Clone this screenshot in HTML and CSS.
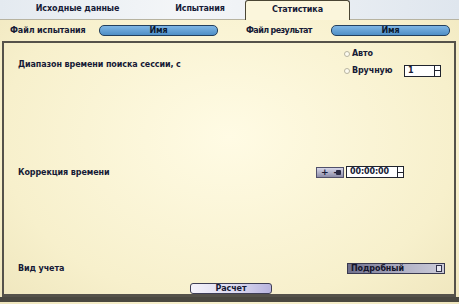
FILE: index.html
```html
<!DOCTYPE html>
<html>
	<head>
		<meta charset="UTF-8">
		<title>Статистика</title>
		<link rel="stylesheet" href="styles.css">
	</head>
	<body>
		<div id="tabs">
			<span class="tab">Исходные данные</span>
			<span class="tab">Испытания</span>
			<span class="tab active">Статистика</span>
		</div>
		<div id="files">
			<span class="flabel">Файл испытания</span>
			<span class="pill">Имя</span>
			<span class="flabel right">Файл результат</span>
			<span class="pill">Имя</span>
		</div>
		<div id="panel">
			<div class="row range">
				<span class="label">Диапазон времени поиска сессии, с</span>
				<div class="radios">
					<div class="radio"><i></i>Авто</div>
					<div class="radio"><i></i>Вручную <span class="spin num">1<b></b></span></div>
				</div>
			</div>
			<div class="row corr">
				<span class="label">Коррекция времени</span>
				<span class="pm">+<em>-</em><u></u></span>
				<span class="spin time">00:00:00<b></b></span>
			</div>
			<div class="row kind">
				<span class="label">Вид учета</span>
				<span class="select">Подробный<b></b></span>
			</div>
			<div class="bottom">
				<span class="btn">Расчет</span>
			</div>
		</div>
		<div id="foot"></div>
	</body>
</html>
```

FILE: styles.css
```css
*{margin:0;padding:0;box-sizing:border-box;}
body{width:459px;height:304px;overflow:hidden;font-family:"DejaVu Sans",Verdana,sans-serif;font-weight:bold;font-size:8px;letter-spacing:-0.1px;color:#161a36;background:radial-gradient(ellipse at 50% 45%,#fffbe4 0%,#f7f0cc 70%,#efe6bd 100%);}

#tabs{height:20px;display:flex;align-items:flex-end;background:linear-gradient(90deg,#e4eaf0,#f4f6f8 40%,#dfe6ee);border-bottom:1px solid #b7b3a0;}
.tab{height:18px;line-height:16px;text-align:center;}
.tab:nth-child(1){width:155px;}
.tab:nth-child(2){width:90px;}
.tab.active{width:105px;margin-bottom:-1px;height:20px;line-height:18px;background:#fbf6dc;border:1px solid #4a4634;border-bottom:none;border-radius:3px 3px 0 0;}

#files{height:21px;display:flex;align-items:center;padding-left:10px;}
.flabel{width:89px;min-width:0;white-space:nowrap;}
.flabel.right{width:85px;margin-left:28px;letter-spacing:-0.6px;}
.pill{flex-shrink:0;width:119px;height:11px;line-height:9px;text-align:center;background:linear-gradient(#7fb6e4,#4f8fc6);border:1px solid #23405e;border-radius:5px;color:#0c1a30;}

#panel{height:256px;margin:0 3px 0 2px;border:2px solid #55524a;border-bottom-width:3px;display:flex;flex-direction:column;}
.row{display:flex;align-items:center;}
.label{flex:1;padding-left:14px;}
.range{height:38px;padding-right:13px;}
.range .label{padding-top:5px;}
.radios{width:97px;}
.radio{display:flex;align-items:center;height:17px;}
.radio i{width:6px;height:6px;margin-right:2px;border:1px solid #b8b4a0;border-radius:50%;background:#fdfbf0;}
.spin{position:relative;display:inline-block;height:12px;line-height:10px;border:1px solid #20242e;background:#fff;padding-left:3px;}
.spin b{position:absolute;right:0;top:0;width:6px;height:10px;border-left:1px solid #20242e;background:linear-gradient(#fff 45%,#20242e 45%,#20242e 55%,#fff 55%);}
.num{width:37px;margin-left:auto;}
.corr{height:12px;margin-top:85px;padding-right:50px;}
.pm{width:28px;height:11px;line-height:9px;margin-right:2px;padding-left:4px;border:1px solid #50506a;background:linear-gradient(#d6d6e8,#8c8ca8);font-size:9px;position:relative;}
.pm em{font-style:normal;margin-left:5px;}
.pm u{position:absolute;right:2px;top:2px;width:5px;height:5px;background:#2a2a44;border-radius:1px;}
.time{width:58px;}
.kind{height:12px;margin-top:84px;padding-right:9px;}
.select{position:relative;width:98px;height:11px;line-height:9px;padding-left:3px;border:1px solid #3a3a50;background:linear-gradient(90deg,#6f6f8c,#b4b4c8 60%,#cacad8);color:#14142a;}
.select b{position:absolute;right:2px;top:1px;width:6px;height:7px;border:1px solid #30304a;background:#e8e8f0;}
.bottom{display:flex;justify-content:center;padding-top:9px;padding-left:4px;}
.btn{width:82px;height:11px;line-height:9px;text-align:center;border:1px solid #3e3e55;border-radius:3px;background:linear-gradient(90deg,#f4f2fa,#d8d6ee 60%,#b8b4de);}

#foot{height:5px;background:#4a4840;}
```
